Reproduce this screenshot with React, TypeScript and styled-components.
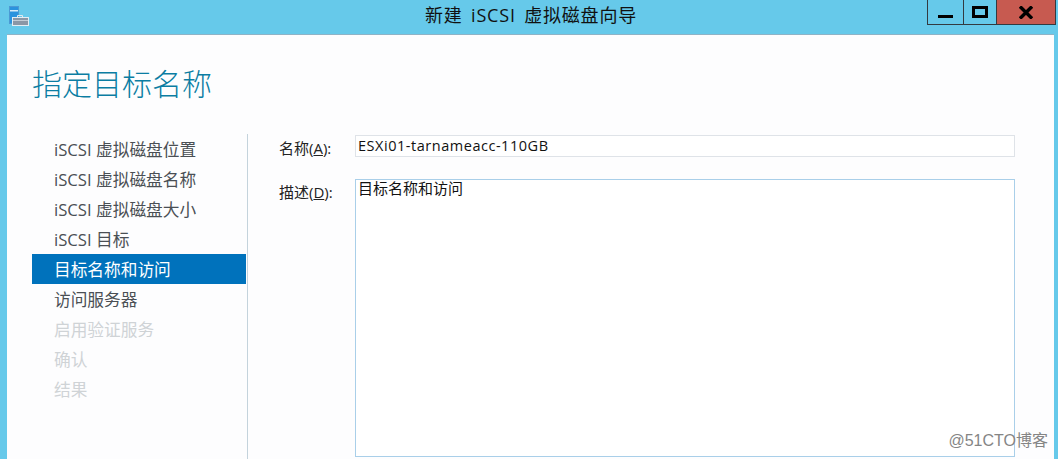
import React from "react";
import styled, { createGlobalStyle } from "styled-components";

const Global = createGlobalStyle`
  html, body { margin: 0; padding: 0; width: 1058px; height: 459px; overflow: hidden; background: #66c9ea; }
  * { box-sizing: border-box; }
`;
const CJK = `"Open Sans", "Noto Sans CJK SC", sans-serif`;

const Win = styled.div`
  position: relative;
  width: 1058px;
  height: 459px;
  display: flex;
  flex-direction: column;
  background: #66c9ea;
  font-family: ${CJK};
  overflow: hidden;
`;
const TitleBar = styled.div`
  height: 34px;
  flex: none;
  display: flex;
  align-items: flex-start;
  padding: 0 2px 0 8px;
`;
const AppIcon = styled.svg`
  width: 22px;
  height: 26px;
  margin-top: 6px;
  flex: none;
`;
const TitleText = styled.div`
  flex: 1;
  text-align: center;
  font-size: 18px;
  word-spacing: 3px;
  letter-spacing: 0.8px;
  line-height: 31px;
  color: #111;
  padding-left: 105px;
`;
const Controls = styled.div`
  display: flex;
  height: 25px;
  border: 1px solid #333a40;
  border-top: none;
  flex: none;
`;
const Ctl = styled.div<{ $w: number; $close?: boolean }>`
  width: ${(p) => p.$w}px;
  background: ${(p) => (p.$close ? "#c75a50" : "transparent")};
  border-right: ${(p) => (p.$close ? "none" : "1px solid #333a40")};
  display: flex;
  align-items: center;
  justify-content: center;
`;
const Content = styled.div`
  flex: 1;
  margin: 0 4px 0 7px;
  background: #fdfdfe;
  border-top: 1px solid #8fb3c6;
  display: flex;
  flex-direction: column;
  min-height: 0;
`;
const Heading = styled.h1`
  margin: 0;
  height: 99px;
  flex: none;
  padding: 27px 0 0 25px;
  font-size: 30px;
  line-height: 44px;
  font-weight: 300;
  color: #0b7da3;
`;
const Main = styled.div`
  flex: 1;
  display: flex;
  min-height: 0;
`;
const Side = styled.div`
  width: 241px;
  padding-left: 25px;
  border-right: 1px solid #c4d3dc;
  flex: none;
`;
const Step = styled.div<{ $state?: "active" | "off" }>`
  width: 214px;
  height: 30px;
  line-height: 31px;
  padding-left: 22px;
  font-size: 16.7px;
  white-space: pre;
  background: ${(p) => (p.$state === "active" ? "#0072bc" : "transparent")};
  color: ${(p) => (p.$state === "active" ? "#fff" : p.$state === "off" ? "#cfd3d6" : "#4a4f54")};
`;
const Form = styled.div`
  flex: 1;
  padding: 1px 39px 0 31px;
  display: flex;
  flex-direction: column;
  gap: 17px;
  min-width: 0;
`;
const Row = styled.div<{ $grow?: boolean }>`
  display: flex;
  ${(p) => (p.$grow ? "flex: 1; padding-bottom: 2px; min-height: 0;" : "")}
`;
const Label = styled.label`
  width: 76px;
  flex: none;
  font-size: 15px;
  line-height: 27px;
  color: #222;
  u { text-decoration: underline; }
`;
const NameBox = styled.div`
  flex: 1;
  max-height: 22px;
  border: 1px solid #dfe3e8;
  background: #fff;
  padding-left: 2px;
  font-size: 14.5px;
  line-height: 19px;
  color: #111;
  letter-spacing: 0.53px;
`;
const DescBox = styled.div`
  flex: 1;
  border: 1px solid #a9cfe9;
  background: #fff;
  padding-left: 2px;
  font-size: 15px;
  line-height: 17px;
  color: #111;
`;
const Mark = styled.div`
  position: absolute;
  right: 10px;
  top: 430px;
  font-family: "Liberation Sans", "Noto Sans CJK SC", sans-serif;
  font-size: 16px;
  line-height: 22px;
  color: #858585;
`;

export default function App() {
  return (
    <Win>
      <Global />
      <TitleBar>
        <AppIcon viewBox="0 0 22 26">
          <rect x="1.5" y="0.5" width="9" height="17" fill="#2a93de" stroke="#4b9ad4" />
          <rect x="2" y="4" width="8" height="1.5" fill="#d6ecf8" />
          <path d="M9.5 11V9.5h5V11" fill="none" stroke="#dfe9ef" />
          <rect x="4.5" y="11.5" width="16" height="8" fill="#8a97a6" stroke="#e2edf3" />
          <rect x="5" y="14" width="15" height="1" fill="#c2ccd5" />
        </AppIcon>
        <TitleText>新建 iSCSI 虚拟磁盘向导</TitleText>
        <Controls>
          <Ctl $w={36}>
            <svg width="15" height="14" viewBox="0 0 15 14"><rect x="0" y="10" width="15" height="3" fill="#000" /></svg>
          </Ctl>
          <Ctl $w={33}>
            <svg width="16" height="13" viewBox="0 0 16 13"><rect x="1.5" y="1.5" width="13" height="9" fill="none" stroke="#000" strokeWidth="3" /></svg>
          </Ctl>
          <Ctl $w={58} $close>
            <svg width="14" height="13" viewBox="0 0 14 13"><path d="M1 0.5 L13 12.5 M13 0.5 L1 12.5" stroke="#000" strokeWidth="3.4" /></svg>
          </Ctl>
        </Controls>
      </TitleBar>
      <Content>
        <Heading>指定目标名称</Heading>
        <Main>
          <Side>
            <Step>iSCSI 虚拟磁盘位置</Step>
            <Step>iSCSI 虚拟磁盘名称</Step>
            <Step>iSCSI 虚拟磁盘大小</Step>
            <Step>iSCSI 目标</Step>
            <Step $state="active">目标名称和访问</Step>
            <Step>访问服务器</Step>
            <Step $state="off">启用验证服务</Step>
            <Step $state="off">确认</Step>
            <Step $state="off">结果</Step>
          </Side>
          <Form>
            <Row>
              <Label>名称(<u>A</u>):</Label>
              <NameBox>ESXi01-tarnameacc-110GB</NameBox>
            </Row>
            <Row $grow>
              <Label>描述(<u>D</u>):</Label>
              <DescBox>目标名称和访问</DescBox>
            </Row>
          </Form>
        </Main>
      </Content>
      <Mark>@51CTO博客</Mark>
    </Win>
  );
}
